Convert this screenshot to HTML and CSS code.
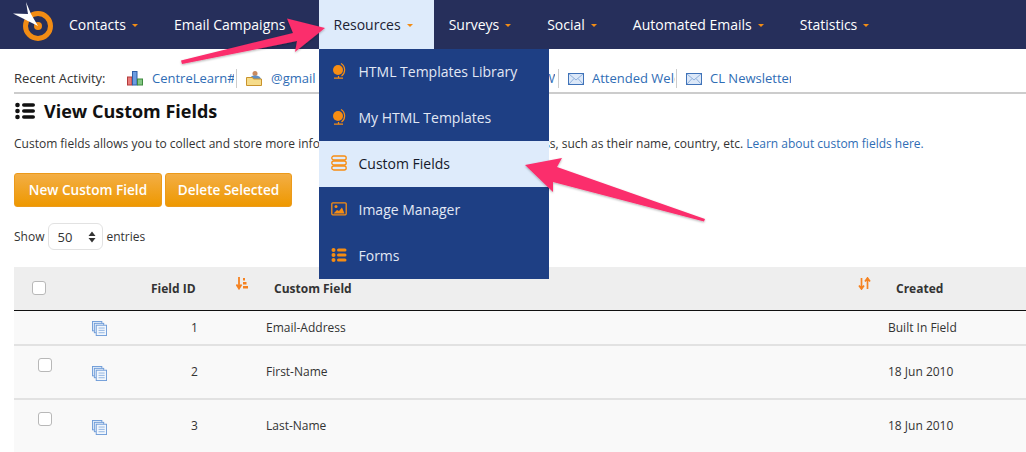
FILE: index.html
```html
<!DOCTYPE html>
<html lang="en">
<head>
<meta charset="utf-8">
<title>View Custom Fields</title>
<link rel="stylesheet" href="styles.css">
</head>
<body>
<header class="nav">
  <a class="logo" href="#">
    <svg width="54" height="49" viewBox="0 0 54 49">
      <circle cx="38" cy="26" r="12.5" fill="none" stroke="#f28c14" stroke-width="5"/>
      <circle cx="38" cy="26" r="4" fill="#f28c14"/>
      <path d="M26 2 L31 14 L38 26 L26 20 L13 13.500 L28 14 Z" fill="#fff"/>
    </svg>
  </a>
  <ul class="menu">
    <li class="menu-item"><span>Contacts</span><i class="caret"></i></li>
    <li class="menu-item"><span>Email Campaigns</span><i class="caret"></i></li>
    <li class="menu-item open"><span>Resources</span><i class="caret"></i>
      <ul class="dropdown">
        <li class="drop-item">
          <svg class="drop-icon" viewBox="0 0 16 16"><circle cx="7" cy="7" r="5" fill="#f78d12"/><path d="M10 .5a7.500 7.500 0 0 1 .5 12.500M7.500 13v1.500M3 15.200h9" fill="none" stroke="#f78d12" stroke-width="1.200"/></svg>
          HTML Templates Library</li>
        <li class="drop-item">
          <svg class="drop-icon" viewBox="0 0 16 16"><circle cx="7" cy="7" r="5" fill="#f78d12"/><path d="M10 .5a7.500 7.500 0 0 1 .5 12.500M7.500 13v1.500M3 15.200h9" fill="none" stroke="#f78d12" stroke-width="1.200"/></svg>
          My HTML Templates</li>
        <li class="drop-item active">
          <svg class="drop-icon" viewBox="0 0 16 16"><g fill="none" stroke="#f78d12" stroke-width="1.300"><rect x=".8" y="1" width="14.400" height="4" rx="2"/><rect x=".8" y="6" width="14.400" height="4" rx="2"/><rect x=".8" y="11" width="14.400" height="4" rx="2"/></g></svg>
          Custom Fields</li>
        <li class="drop-item">
          <svg class="drop-icon" viewBox="0 0 16 16"><rect x=".8" y="1.800" width="14.400" height="12" rx="1" fill="none" stroke="#f78d12" stroke-width="1.300"/><circle cx="5" cy="5.500" r="1.500" fill="#f78d12"/><path d="M2.500 12.500 L6 9 L8 10 L11 6.500 L13.500 12.500 Z" fill="#f78d12"/></svg>
          Image Manager</li>
        <li class="drop-item">
          <svg class="drop-icon" viewBox="0 0 16 16"><g fill="#f78d12"><circle cx="2.500" cy="3" r="2"/><circle cx="2.500" cy="8" r="2"/><circle cx="2.500" cy="13" r="2"/><rect x="6" y="1.500" width="9.500" height="3" rx="1.500"/><rect x="6" y="6.500" width="9.500" height="3" rx="1.500"/><rect x="6" y="11.500" width="9.500" height="3" rx="1.500"/></g></svg>
          Forms</li>
      </ul>
    </li>
    <li class="menu-item"><span>Surveys</span><i class="caret"></i></li>
    <li class="menu-item"><span>Social</span><i class="caret"></i></li>
    <li class="menu-item"><span>Automated Emails</span><i class="caret"></i></li>
    <li class="menu-item"><span>Statistics</span><i class="caret"></i></li>
  </ul>
</header>

<main class="page">
  <div class="recent">
    <span class="recent-label">Recent Activity:</span>
    <div class="recent-item w-chart">
      <svg class="recent-icon" viewBox="0 0 16 16"><rect x=".5" y="7" width="4.500" height="8" fill="#e87a7a" stroke="#b23b3b"/><rect x="5.500" y="1.500" width="4.500" height="13.500" fill="#6d9ce0" stroke="#2f5fa8"/><rect x="10.500" y="9" width="5" height="6" fill="#84c784" stroke="#3f8a3f"/></svg>
      <a class="recent-link" href="#">CentreLearn#1</a>
    </div>
    <div class="recent-item w-gmail">
      <svg class="recent-icon" viewBox="0 0 16 16"><circle cx="9" cy="3.500" r="2.500" fill="#c98a5e"/><path d="M4.500 9c0-3 2-3.500 4.500-3.500S14 6 15 9Z" fill="#5f8fc4"/><path d="M.5 7.500h6l1 1.500h8v6.500H.5Z" fill="#f6dc8a" stroke="#c9932c"/></svg>
      <a class="recent-link" href="#">@gmail</a>
    </div>
    <div class="recent-item w-hidden">
      <svg class="recent-icon" viewBox="0 0 16 16"><rect x=".5" y="3.500" width="15" height="11" fill="#dce8f8" stroke="#3f72b8"/></svg>
      <a class="recent-link" href="#">Welcome NeW</a>
    </div>
    <div class="recent-item w-mail">
      <svg class="recent-icon" viewBox="0 0 16 16"><rect x=".5" y="3.500" width="15" height="11" fill="#dce8f8" stroke="#3f72b8"/><path d="M1 4l7 6 7-6M1 14l5-5.500M15 14l-5-5.500" fill="none" stroke="#8fb0dc"/></svg>
      <a class="recent-link" href="#">Attended Welcome</a>
    </div>
    <div class="recent-item w-last">
      <svg class="recent-icon" viewBox="0 0 16 16"><rect x=".5" y="3.500" width="15" height="11" fill="#dce8f8" stroke="#3f72b8"/><path d="M1 4l7 6 7-6M1 14l5-5.500M15 14l-5-5.500" fill="none" stroke="#8fb0dc"/></svg>
      <a class="recent-link" href="#">CL Newsletter</a>
    </div>
  </div>

  <h1 class="title">
    <svg class="title-icon" viewBox="0 0 20 18"><g fill="#111"><circle cx="2.500" cy="3" r="2.300"/><circle cx="2.500" cy="9" r="2.300"/><circle cx="2.500" cy="15" r="2.300"/><rect x="7" y="1.200" width="13" height="3.600" rx="1.800"/><rect x="7" y="7.200" width="13" height="3.600" rx="1.800"/><rect x="7" y="13.200" width="13" height="3.600" rx="1.800"/></g></svg>
    View Custom Fields
  </h1>

  <p class="intro">Custom fields allows you to collect and store more information about any person's email address, such as their name, country, etc. <a href="#">Learn about custom fields here.</a></p>

  <div class="actions">
    <button class="btn">New Custom Field</button>
    <button class="btn">Delete Selected</button>
  </div>

  <div class="length">
    Show
    <span class="select">50
      <svg width="8" height="12" viewBox="0 0 8 12"><path d="M4 0.500L7.500 5H.5ZM4 11.500L.5 7H7.500Z" fill="#333"/></svg>
    </span>
    entries
  </div>

  <div class="table">
    <div class="row head">
      <div class="cell"><span class="check head-check"></span></div>
      <div class="cell"></div>
      <div class="cell head-id">Field ID
        <svg class="sort sort-id" width="13" height="13" viewBox="0 0 13 13"><path d="M3 0v10M.5 7.500L3 11.500l2.500-4" fill="none" stroke="#f58220" stroke-width="1.800"/><path d="M7 1h2v2.500H7ZM7 5h3.500v2.500H7ZM7 9h5v2.500H7Z" fill="#f58220"/></svg>
      </div>
      <div class="cell head-name">Custom Field
        <svg class="sort sort-name" width="13" height="13" viewBox="0 0 13 13"><path d="M3.500 1v10.500M1 8.500l2.500 3.500L6 8.500M9.500 12V1.500M7 4.500L9.500 1 12 4.500" fill="none" stroke="#f58220" stroke-width="1.700"/></svg>
      </div>
      <div class="cell head-created">Created</div>
    </div>

    <div class="row short">
      <div class="cell"></div>
      <div class="cell"><svg class="copy" viewBox="0 0 16 16"><g fill="#e6effa" stroke="#6f9cd8"><rect x=".5" y=".5" width="10" height="10"/><rect x="2.500" y="2.500" width="10" height="10"/><rect x="4.500" y="4.500" width="11" height="11" fill="#f1f6fc"/></g><path d="M7 7.500h6.500M7 10h6.500M7 12.500h6.500" stroke="#8fb2e0"/></svg></div>
      <div class="cell cell-id">1</div>
      <div class="cell cell-text">Email-Address</div>
      <div class="cell cell-text">Built In Field</div>
    </div>

    <div class="row tall">
      <div class="cell"><span class="check row-check"></span></div>
      <div class="cell"><svg class="copy" viewBox="0 0 16 16"><g fill="#e6effa" stroke="#6f9cd8"><rect x=".5" y=".5" width="10" height="10"/><rect x="2.500" y="2.500" width="10" height="10"/><rect x="4.500" y="4.500" width="11" height="11" fill="#f1f6fc"/></g><path d="M7 7.500h6.500M7 10h6.500M7 12.500h6.500" stroke="#8fb2e0"/></svg></div>
      <div class="cell cell-id">2</div>
      <div class="cell cell-text">First-Name</div>
      <div class="cell cell-text">18 Jun 2010</div>
    </div>

    <div class="row tall">
      <div class="cell"><span class="check row-check"></span></div>
      <div class="cell"><svg class="copy" viewBox="0 0 16 16"><g fill="#e6effa" stroke="#6f9cd8"><rect x=".5" y=".5" width="10" height="10"/><rect x="2.500" y="2.500" width="10" height="10"/><rect x="4.500" y="4.500" width="11" height="11" fill="#f1f6fc"/></g><path d="M7 7.500h6.500M7 10h6.500M7 12.500h6.500" stroke="#8fb2e0"/></svg></div>
      <div class="cell cell-id">3</div>
      <div class="cell cell-text">Last-Name</div>
      <div class="cell cell-text">18 Jun 2010</div>
    </div>
  </div>
</main>

<svg class="arrows" width="1026" height="452" viewBox="0 0 1026 452">
  <defs>
    <filter id="arrow-shadow" x="-10%" y="-10%" width="120%" height="130%"><feDropShadow dx="0" dy="1" stdDeviation="1" flood-color="#000" flood-opacity=".3"/></filter>
  </defs>
  <g fill="#fb2d6c" filter="url(#arrow-shadow)">
    <path d="M181 60.500 L293 33 L287 18.500 L325 28 L295 52 L297 41 L182 64 Z"/>
    <path d="M525 165 L562 158 L557 167 L705 219 L704 221.500 L553 182 L553 192 Z"/>
  </g>
</svg>
</body>
</html>
```

FILE: styles.css
```css
* { box-sizing: border-box; }
html, body { margin: 0; padding: 0; height: 452px; overflow: hidden; background: #fff; }
body { font-family: "Open Sans", "Liberation Sans", sans-serif; font-size: 12px; color: #333; position: relative; }
ul { list-style: none; margin: 0; padding: 0; }
a { color: #2f6db5; text-decoration: none; }

.nav { display: flex; height: 49px; background: #262f5b; }
.logo { display: block; width: 54px; height: 49px; flex: none; }
.logo svg { display: block; }
.menu { display: flex; }
.menu-item { position: relative; display: flex; align-items: center; height: 49px; padding: 0 21px 0 15px; color: #fff; font-size: 14px; font-weight: 500; white-space: nowrap; }
.menu-item.open { background: #deebfb; color: #1c2233; font-weight: 400; }
.caret { width: 0; height: 0; margin-left: 6px; margin-top: 2px; border-left: 3.500px solid transparent; border-right: 3.500px solid transparent; border-top: 3.500px solid #f28c14; }

.dropdown { position: absolute; left: 0; top: 49px; width: 230px; height: 230px; background: #1e3f84; z-index: 5; }
.drop-item { display: flex; align-items: center; height: 46px; padding: 0 0 2px 12px; color: #e2e8f4; font-size: 14px; font-weight: 400; }
.drop-item.active { background: #deebfb; color: #15192a; }
.drop-icon { width: 16px; height: 16px; margin-right: 12px; flex: none; }

.page { padding-left: 14px; }
.recent { display: flex; align-items: center; height: 45px; padding-top: 20px; padding-bottom: 5px; border-bottom: 2px solid #ccc; font-size: 13px; }
.recent-label { width: 113px; flex: none; color: #333; }
.recent-item { display: flex; align-items: center; height: 19px; flex: none; overflow: hidden; }
.recent-icon { width: 16px; height: 16px; margin-right: 9px; flex: none; }
.recent-link { display: block; white-space: nowrap; overflow: hidden; flex: 1; }
.w-chart { width: 110px; padding-right: 2px; border-right: 1px solid #ccc; margin-right: 9px; }
.w-gmail { width: 204px; }
.w-hidden { width: 109px; padding-right: 3px; border-right: 1px solid #ccc; margin-right: 9px; }
.w-hidden .recent-icon { margin-right: 6px; }
.w-mail { width: 109px; padding-right: 1px; border-right: 1px solid #ccc; margin-right: 9px; }
.w-mail .recent-icon, .w-last .recent-icon { margin-right: 8px; }
.w-last { width: 105px; }

.title { display: flex; align-items: center; margin: 5px 0 0; height: 24px; color: #111; font-size: 18px; font-weight: 700; }
.title-icon { width: 20px; height: 18px; margin-left: 1px; margin-right: 9px; flex: none; }
.intro { margin: 12px 0 0; line-height: 17px; font-size: 12px; white-space: nowrap; color: #333; }

.actions { display: flex; gap: 3px; margin-top: 21px; }
.btn { height: 34px; padding: 0 0 2px; border: 1px solid #ec9a1a; border-radius: 3px; background: linear-gradient(#f3ae45, #ee9800); color: #fff; font-family: inherit; font-size: 13.6px; font-weight: 600; white-space: nowrap; }
.actions .btn:first-child { width: 148px; }
.actions .btn:last-child { width: 127px; }

.length { display: flex; align-items: center; gap: 3px; margin-top: 16px; height: 27px; font-size: 12px; }
.select { display: flex; align-items: center; justify-content: space-between; width: 55px; height: 27px; margin-left: 1px; padding: 0 6px 0 8px; border: 1px solid #e2e2e2; border-radius: 6px; font-size: 13px; background: #fff; }

.table { margin-top: 17px; }
.row { display: grid; grid-template-columns: 66px 60px 118px 622px 1fr; width: 1012px; background: #f9f9f9; border-bottom: 2px solid #e2e2e2; }
.row.head { height: 44px; background: #eee; border-bottom: 1px solid #111; padding-bottom: 1px; }
.row.short { height: 35px; }
.row.tall { height: 54px; padding-bottom: 2px; }
.cell { position: relative; display: flex; align-items: center; }
.check { display: block; width: 14px; height: 14px; border: 1px solid #b8b8b8; border-radius: 3px; background: #fff; }
.head-check { margin-left: 18px; }
.row-check { margin-left: 24px; margin-bottom: 13px; }
.copy { width: 15px; height: 15px; margin-left: 12px; margin-top: 2px; }
.row.tall .copy { margin-top: 5px; }
.head-id, .head-name, .head-created { font-weight: 700; color: #333; font-size: 12px; }
.head-id { padding-left: 11px; }
.head-name { padding-left: 16px; }
.head-created { padding-left: 16px; }
.sort { position: absolute; top: 10px; }
.sort-id { left: 96px; }
.sort-name { right: 9px; }
.cell-id { padding-left: 51px; font-size: 12px; }
.cell-text { padding-left: 8px; font-size: 12px; }

.arrows { position: absolute; left: 0; top: 0; z-index: 10; pointer-events: none; }
```
